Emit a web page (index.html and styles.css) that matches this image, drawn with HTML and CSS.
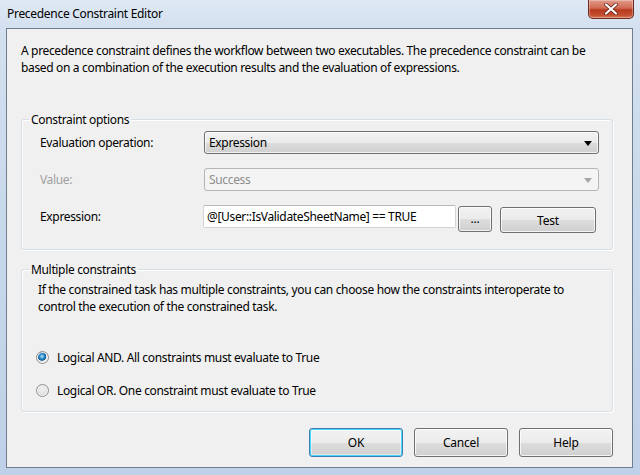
FILE: index.html
```html
<!DOCTYPE html>
<html>
<head>
<meta charset="utf-8">
<link rel="stylesheet" href="styles.css">
</head>
<body>
<div class="window">
  <div class="titlebar">
    <span class="title">Precedence Constraint Editor</span>
    <div class="close">
      <svg width="14" height="12" viewBox="0 0 14 12"><path d="M2 1.5 L12 10.5 M12 1.5 L2 10.5" stroke="#5a1a12" stroke-width="3.6" stroke-linecap="round"/><path d="M2 1.5 L12 10.5 M12 1.5 L2 10.5" stroke="#ffffff" stroke-width="2.2" stroke-linecap="round"/></svg>
    </div>
  </div>
  <div class="client">
    <p class="intro">A precedence constraint defines the workflow between two executables. The precedence constraint can be based on a combination of the execution results and the evaluation of expressions.</p>

    <fieldset class="group group-options">
      <legend>Constraint options</legend>
      <div class="form">
        <label class="lbl">Evaluation operation:</label>
        <div class="combo"><span>Expression</span><span class="arrow"></span></div>
        <label class="lbl disabled">Value:</label>
        <div class="combo combo-disabled"><span>Success</span><span class="arrow"></span></div>
        <label class="lbl">Expression:</label>
        <div class="expr-row">
          <div class="textbox">@[User::IsValidateSheetName] == TRUE</div>
          <button class="btn btn-dots">...</button>
          <button class="btn btn-test">Test</button>
        </div>
      </div>
    </fieldset>

    <fieldset class="group group-multi">
      <legend>Multiple constraints</legend>
      <p class="multi-text">If the constrained task has multiple constraints, you can choose how the constraints interoperate to<br>control the execution of the constrained task.</p>
      <div class="radios">
        <div class="radio-row"><span class="radio checked"></span><span>Logical AND. All constraints must evaluate to True</span></div>
        <div class="radio-row"><span class="radio"></span><span>Logical OR. One constraint must evaluate to True</span></div>
      </div>
    </fieldset>

    <div class="buttons">
      <button class="btn btn-main btn-default">OK</button>
      <button class="btn btn-main">Cancel</button>
      <button class="btn btn-main">Help</button>
    </div>
  </div>
</div>
</body>
</html>
```

FILE: styles.css
```css
* { box-sizing: border-box; }
html, body { margin: 0; padding: 0; }
body {
  width: 640px;
  height: 475px;
  overflow: hidden;
  font-family: "Noto Sans", "Open Sans", sans-serif;
  font-size: 12px;
  color: #000;
  letter-spacing: -0.34px;
}
.window {
  width: 640px;
  height: 475px;
  background: linear-gradient(180deg, #dfe9f5 0px, #d3e0ef 28px, #c9d9ec 200px, #bfd1e8 475px);
  padding: 0 7px 7px 6px;
  display: flex;
  flex-direction: column;
}
.titlebar {
  height: 28px;
  display: flex;
  justify-content: space-between;
  align-items: flex-start;
  flex: none;
}
.title {
  padding-left: 1px;
  line-height: 27px;
  font-size: 12px;
  letter-spacing: -0.3px;
  color: #000;
}
.close {
  width: 46px;
  height: 19px;
  margin-right: -1px;
  border: 1px solid #6b2b22;
  border-top: none;
  border-radius: 0 0 5px 5px;
  background: linear-gradient(180deg, #e09a88 0%, #d06a53 45%, #b8391f 55%, #c4502f 85%, #dc7c5e 100%);
  display: flex;
  align-items: center;
  justify-content: center;
  box-shadow: inset 0 0 0 1px rgba(255,255,255,0.3);
}
.client {
  flex: 1;
  background: #f0f0f0;
  border: 1px solid #6f7d8c;
  padding: 13px 19px 0 14px;
  display: flex;
  flex-direction: column;
}
.intro {
  margin: 0;
  line-height: 17px;
}
.group {
  margin: 35px 0 0 0;
  border: 1px solid #d5dfe5;
  border-radius: 3px;
  box-shadow: inset 1px 1px 0 #ffffff, 1px 1px 0 #ffffff;
  padding: 0;
  min-width: 0;
}
.group legend {
  margin-left: 7px;
  padding: 0 2px;
  line-height: 17px;
}
.form {
  display: grid;
  grid-template-columns: 164px 395px;
  grid-auto-rows: 23px;
  row-gap: 14px;
  align-items: center;
  padding: 3px 0 21px 18px;
}
.lbl.disabled { color: #a0a0a0; }
.combo {
  height: 23px;
  border: 1px solid #707070;
  border-radius: 3px;
  background: linear-gradient(180deg, #f2f2f2 0%, #ebebeb 50%, #dddddd 51%, #cfcfcf 100%);
  box-shadow: inset 0 0 0 1px rgba(255,255,255,0.7);
  display: flex;
  align-items: center;
  justify-content: space-between;
  padding: 0 6px 0 4px;
}
.arrow {
  width: 0; height: 0;
  border-left: 4px solid transparent;
  border-right: 4px solid transparent;
  border-top: 5px solid #000;
  margin-top: 1px;
}
.combo-disabled {
  background: #f4f4f4;
  border-color: #b5b5b5;
  box-shadow: none;
  color: #8d8d8d;
}
.combo-disabled .arrow { border-top-color: #a6a6a6; }
.expr-row {
  display: flex;
  align-items: flex-start;
  height: 27px;
  margin-top: 4px;
  margin-left: -1px;
}
.textbox {
  width: 253px;
  height: 23px;
  background: #fff;
  border: 1px solid #d4d4d4;
  border-top-color: #b9b9b9;
  border-radius: 2px;
  padding: 0 4px 0 3px;
  line-height: 21px;
}
.btn {
  font-family: inherit;
  font-size: 12px;
  color: #000;
  border: 1px solid #707070;
  border-radius: 3px;
  background: linear-gradient(180deg, #f2f2f2 0%, #ebebeb 50%, #dddddd 51%, #cfcfcf 100%);
  box-shadow: inset 0 0 0 1px rgba(255,255,255,0.75);
  padding: 0;
  letter-spacing: -0.2px;
}
.btn-dots {
  width: 34px;
  height: 26px;
  margin-left: 2px;
  margin-top: 1px;
  line-height: 18px;
}
.btn-test {
  width: 96px;
  height: 26px;
  margin-left: 8px;
  margin-top: 2px;
}
.group-multi {
  margin-top: 11px;
  height: 151px;
}
.multi-text {
  margin: 3px 0 0 16px;
  line-height: 17px;
}
.radios {
  display: flex;
  flex-direction: column;
  gap: 17px;
  margin: 34px 0 0 14px;
}
.radio-row {
  display: flex;
  align-items: center;
  gap: 8px;
  height: 16px;
}
.radio {
  width: 13px;
  height: 13px;
  border-radius: 50%;
  border: 1px solid #8e8f8f;
  background: radial-gradient(circle at 50% 40%, #f4f4f4 0%, #dcdcdc 70%, #cfcfcf 100%);
  box-shadow: inset 0 0 0 1px #f6f6f6;
  flex: none;
}
.radio.checked {
  background: radial-gradient(circle at 45% 40%, #cfe8f8 0px, #3d9ad6 2px, #105a96 4px, #e6e6e6 4.6px, #d6d6d6 100%);
}
.buttons {
  display: flex;
  justify-content: flex-end;
  gap: 11px;
  margin-top: 16px;
}
.btn-main {
  width: 94px;
  height: 29px;
}
.btn-default {
  border-color: #3c7fb1;
  box-shadow: inset 0 0 0 1px #48d7fb, inset 0 0 0 2px rgba(255,255,255,0.4);
}
```
